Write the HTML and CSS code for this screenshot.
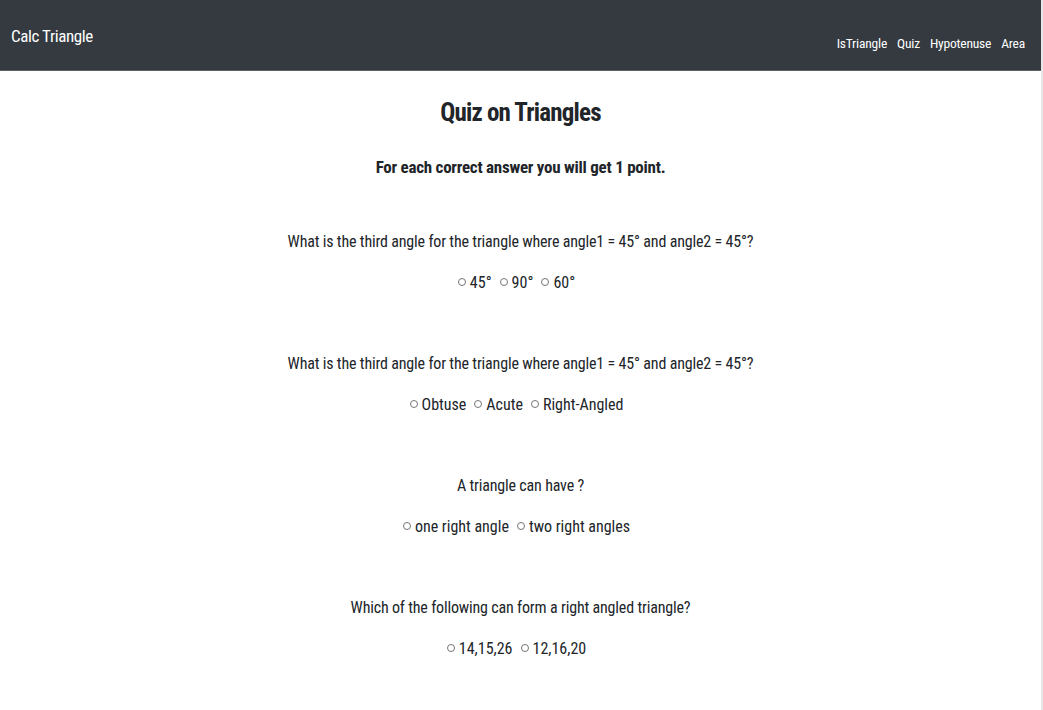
FILE: index.html
```html
<!DOCTYPE html>
<html lang="en">
<head>
<meta charset="utf-8">
<title>Calc Triangle</title>
<link rel="stylesheet" href="styles.css">
</head>
<body>
<nav class="navbar">
  <a class="brand" href="#">Calc Triangle</a>
  <ul class="nav-links">
    <li><a href="#">IsTriangle</a></li>
    <li><a href="#">Quiz</a></li>
    <li><a href="#">Hypotenuse</a></li>
    <li><a href="#">Area</a></li>
  </ul>
</nav>
<main class="quiz">
  <h1 class="title">Quiz on Triangles</h1>
  <p class="subtitle">For each correct answer you will get 1 point.</p>
  <form class="questions">
    <div class="question">
      <p class="q-text">What is the third angle for the triangle where angle1 = 45° and angle2 = 45°?</p>
      <div class="options">
        <label class="option"><input type="radio" name="q1" class="radio"><span>45°</span></label>
        <label class="option"><input type="radio" name="q1" class="radio"><span>90°</span></label>
        <label class="option"><input type="radio" name="q1" class="radio"><span>60°</span></label>
      </div>
    </div>
    <div class="question">
      <p class="q-text">What is the third angle for the triangle where angle1 = 45° and angle2 = 45°?</p>
      <div class="options">
        <label class="option"><input type="radio" name="q2" class="radio"><span>Obtuse</span></label>
        <label class="option"><input type="radio" name="q2" class="radio"><span>Acute</span></label>
        <label class="option"><input type="radio" name="q2" class="radio"><span>Right-Angled</span></label>
      </div>
    </div>
    <div class="question">
      <p class="q-text">A triangle can have ?</p>
      <div class="options">
        <label class="option"><input type="radio" name="q3" class="radio"><span>one right angle</span></label>
        <label class="option"><input type="radio" name="q3" class="radio"><span>two right angles</span></label>
      </div>
    </div>
    <div class="question">
      <p class="q-text">Which of the following can form a right angled triangle?</p>
      <div class="options">
        <label class="option"><input type="radio" name="q4" class="radio"><span>14,15,26</span></label>
        <label class="option"><input type="radio" name="q4" class="radio"><span>12,16,20</span></label>
      </div>
    </div>
  </form>
</main>
</body>
</html>
```
FILE: styles.css
```css
body {
  margin: 0;
  font-family: Roboto, "Liberation Sans", Arial, sans-serif;
  font-stretch: 75%;
  color: #212529;
  background: #fff;
  border-right: 2px solid #e6e6e6;
  min-height: 710px;
  box-sizing: border-box;
}

.navbar {
  display: flex;
  justify-content: space-between;
  align-items: center;
  height: 70px;
  padding: 0 16px 0 11px;
  background: #343a40;
  border-bottom: 1px solid #5d6166;
}

.brand {
  color: #fff;
  text-decoration: none;
  font-size: 17px;
  line-height: 24px;
  letter-spacing: -0.4px;
  margin-top: 1px;
}

.nav-links {
  list-style: none;
  margin: 16px 0 0;
  padding: 0;
  display: flex;
  gap: 10px;
}

.nav-links a {
  color: #fff;
  text-decoration: none;
  font-size: 13.5px;
  line-height: 20px;
  letter-spacing: -0.2px;
}

.quiz {
  display: flex;
  flex-direction: column;
  align-items: center;
  text-align: center;
}

.title {
  margin: 26px 0 0;
  font-size: 25px;
  line-height: 32px;
  font-weight: bold;
  letter-spacing: -0.8px;
}

.subtitle {
  margin: 27px 0 0;
  font-size: 17px;
  line-height: 22px;
  font-weight: bold;
  letter-spacing: -0.25px;
}

.questions {
  display: flex;
  flex-direction: column;
  align-items: center;
  gap: 61px;
  margin-top: 54px;
}

.question {
  display: flex;
  flex-direction: column;
  align-items: center;
  gap: 21px;
}

.q-text {
  margin: 0;
  font-size: 16px;
  line-height: 20px;
  letter-spacing: -0.17px;
}

.options {
  display: flex;
  gap: 8px;
  padding-right: 8px;
  font-size: 16px;
  line-height: 20px;
}

.option {
  display: flex;
  align-items: center;
  gap: 4px;
}

.radio {
  appearance: none;
  -webkit-appearance: none;
  width: 8px;
  height: 8px;
  margin: 0 0 2px;
  border: 1px solid #767676;
  border-radius: 50%;
  background: #fff;
}
```
